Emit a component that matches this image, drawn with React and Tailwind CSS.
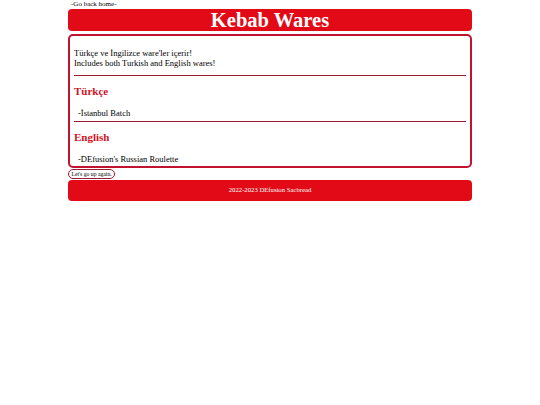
export default function App() {
  const serif = { fontFamily: '"Liberation Serif", "Times New Roman", serif' };
  return (
    <div className="w-[404px] mx-auto text-black" style={serif}>
      <div className="text-[7px] leading-[9px] pl-[3px]">-Go back home-</div>
      <div className="bg-[#e30a17] rounded-[4px] h-[22px] flex items-center justify-center">
        <h1 className="text-white font-bold text-[20.5px] leading-none">Kebab Wares</h1>
      </div>
      <div className="mt-[3px] border-2 border-[#c1122f] rounded-[5px] px-[4px] pt-[12px] pb-[3px] h-[134px]">
        <p className="text-[8.5px] leading-[10px]">Türkçe ve İngilizce ware'ler içerir!<br />Includes both Turkish and English wares!</p>
        <div className="h-px bg-[#9b1b30] mt-[7px]"></div>
        <h2 className="text-[#d01226] font-bold text-[11px] leading-[12px] mt-[9px]">Türkçe</h2>
        <p className="text-[8.5px] leading-[10px] mt-[11px] pl-[4px]">-İstanbul Batch</p>
        <div className="h-px bg-[#9b1b30] mt-[3px]"></div>
        <h2 className="text-[#d01226] font-bold text-[11px] leading-[12px] mt-[9px]">English</h2>
        <p className="text-[8.5px] leading-[10px] mt-[11px] pl-[4px]">-DEfusion's Russian Roulette</p>
      </div>
      <div className="mt-[1px] flex">
        <span className="border border-[#9b1b30] rounded-full px-[2.5px] text-[5.7px] leading-[8px]">Let's go up again.</span>
      </div>
      <div className="mt-[1px] bg-[#e30a17] rounded-[4px] h-[21px] flex items-center justify-center">
        <span className="text-white text-[6.7px] leading-none">2022-2023 DEfusion Sacbread</span>
      </div>
    </div>
  );
}
